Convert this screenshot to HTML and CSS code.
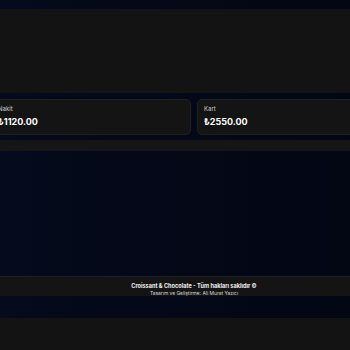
FILE: index.html
```html
<!DOCTYPE html>
<html lang="tr">
<head>
<meta charset="utf-8">
<title>Croissant & Chocolate</title>
<link rel="stylesheet" href="styles.css">
</head>
<body>
<div class="page">
  <section class="hero"></section>
  <div class="cards">
    <div class="card">
      <div class="card-label">Nakit</div>
      <div class="card-value">₺1120.00</div>
    </div>
    <div class="card">
      <div class="card-label">Kart</div>
      <div class="card-value">₺2550.00</div>
    </div>
  </div>
  <div class="strip"></div>
  <main class="content"></main>
  <footer class="footer">
    <div class="footer-title">Croissant &amp; Chocolate - Tüm hakları saklıdır ©</div>
    <div class="footer-sub">Tasarım ve Geliştirme: Ali Murat Yazıcı</div>
  </footer>
  <div class="bottom-gap"></div>
  <div class="bottom"></div>
</div>
</body>
</html>
```
FILE: styles.css
```css
html, body {
  margin: 0;
  padding: 0;
  overflow: hidden;
  height: 350px;
  background: #040817;
}
.page {
  width: 388px;
  padding-top: 9px;
  font-family: Inter, "Open Sans", sans-serif;
  color: #fff;
  background: linear-gradient(90deg, #050a1c 0%, #040818 40%, #030612 100%);
  min-height: 350px;
}
.hero {
  height: 84px;
  background: #131313;
}
.cards {
  display: flex;
  justify-content: center;
  gap: 6px;
  margin-top: 6px;
}
.card {
  flex: 0 0 200px;
  box-sizing: border-box;
  height: 36px;
  padding: 5px 6px 4px;
  background: #141414;
  border: 1px solid #202020;
  border-radius: 5px;
  display: flex;
  flex-direction: column;
  gap: 3px;
}
.card-label {
  font-size: 6px;
  line-height: 8px;
  color: #cfcfcf;
}
.card-value {
  font-size: 9px;
  line-height: 11px;
  font-weight: 700;
  color: #fff;
}
.strip {
  height: 11px;
  margin-top: 5px;
  background: #151515;
}
.content {
  height: 125px;
}
.footer {
  height: 20px;
  box-sizing: border-box;
  border-top: 1px solid #1e1e24;
  background: #141414;
  text-align: center;
  padding-top: 6px;
}
.footer-title {
  font-size: 5.6px;
  line-height: 7px;
  font-weight: 700;
  color: #f0f0f0;
}
.footer-sub {
  font-size: 4.9px;
  line-height: 6px;
  color: #d8d8d8;
}
.bottom-gap {
  height: 22px;
}
.bottom {
  height: 40px;
  background: #131313;
}
```
